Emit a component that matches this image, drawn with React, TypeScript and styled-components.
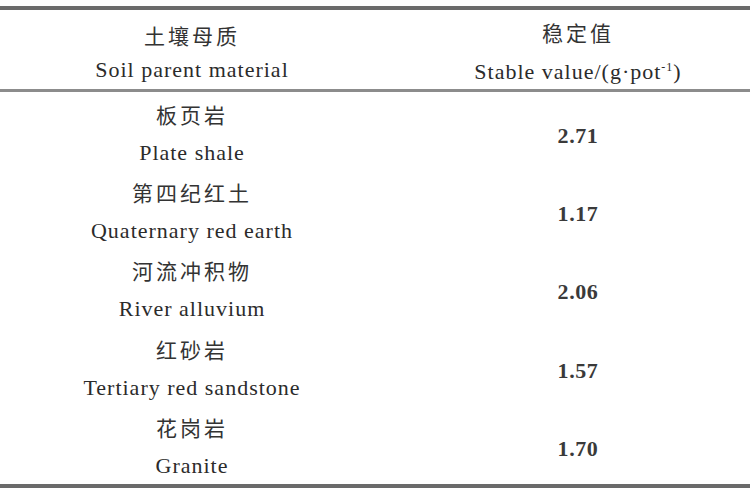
import styled, { createGlobalStyle } from "styled-components"

const Global = createGlobalStyle`
  body {
    margin: 0;
    background: #fff;
  }
`

const Page = styled.div`
  width: 750px;
  height: 500px;
  padding-top: 6px;
  box-sizing: border-box;
  background: #fff;
  font-family: "Liberation Serif", "Noto Sans CJK SC", serif;
  color: #2b2b2b;
`

const Table = styled.div`
  display: grid;
  grid-template-columns: 384px 1fr;
  border-top: 4px solid #6a6a6a;
  border-bottom: 4px solid #6a6a6a;
`

const Head = styled.div`
  display: flex;
  flex-direction: column;
  align-items: center;
  justify-content: center;
  gap: 1px;
  height: 82px;
  padding-top: 6px;
  box-sizing: border-box;
  border-bottom: 3px solid #8c8c8c;
  line-height: 34px;
  padding-left: ${props => (props.$right ? "22px" : "0")};
`

const Cell = styled.div`
  display: flex;
  flex-direction: column;
  align-items: center;
  justify-content: center;
  gap: 3px;
  height: 78.4px;
  padding-top: ${props => (props.$right ? "9px" : "4px")};
  box-sizing: border-box;
  line-height: 36px;
  padding-left: ${props => (props.$right ? "22px" : "0")};
`

const Zh = styled.span`
  font-family: "Noto Sans CJK SC", serif;
  font-size: 21px;
  letter-spacing: 3px;
  color: #333;
`

const En = styled.span`
  font-size: 22px;
  letter-spacing: 1px;
`

const Sup = styled.sup`
  font-size: 12px;
`

const Num = styled.span`
  font-size: 22px;
  letter-spacing: 0.6px;
  font-weight: bold;
  color: #3a3a3a;
`

const rows = [
  ["板页岩", "Plate shale", "2.71"],
  ["第四纪红土", "Quaternary red earth", "1.17"],
  ["河流冲积物", "River alluvium", "2.06"],
  ["红砂岩", "Tertiary red sandstone", "1.57"],
  ["花岗岩", "Granite", "1.70"],
]

export default function App() {
  return (
    <Page>
      <Global />
      <Table>
        <Head>
          <Zh>土壤母质</Zh>
          <En>Soil parent material</En>
        </Head>
        <Head $right>
          <Zh>稳定值</Zh>
          <En>
            Stable value/(g·pot<Sup>-1</Sup>)
          </En>
        </Head>
        {rows.map(r => [
          <Cell key={r[0]}>
            <Zh>{r[0]}</Zh>
            <En>{r[1]}</En>
          </Cell>,
          <Cell $right key={r[2]}>
            <Num>{r[2]}</Num>
          </Cell>,
        ])}
      </Table>
    </Page>
  )
}
